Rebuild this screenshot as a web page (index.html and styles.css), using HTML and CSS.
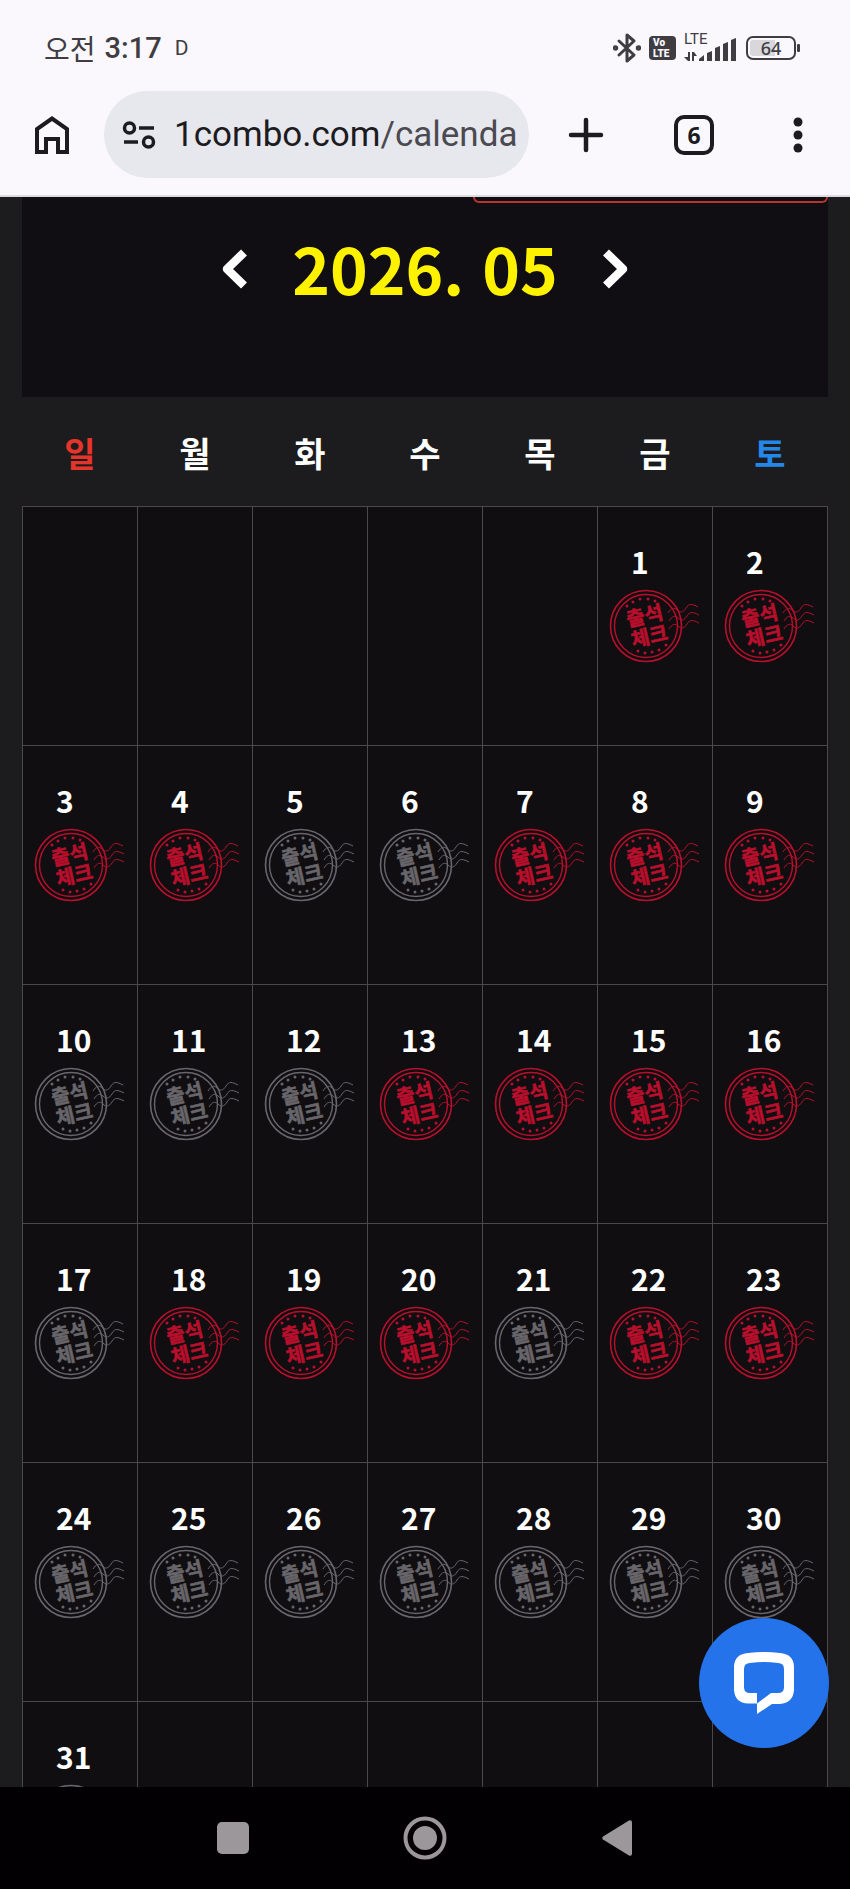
FILE: index.html
```html
<!DOCTYPE html>
<html lang="ko">
<head>
<meta charset="utf-8">
<meta name="viewport" content="width=device-width, initial-scale=1">
<title>1combo.com/calendar</title>
<link rel="stylesheet" href="styles.css">
</head>
<body>
<svg class="defs" aria-hidden="true">
  <symbol id="stamp-frame" viewBox="0 0 92 76">
    <g fill="none" stroke="currentColor">
      <circle cx="37" cy="38" r="35.5" stroke-width="1.6"/>
      <circle cx="37" cy="38" r="31.5" stroke-width="1.4"/>
      <path stroke-width="1" d="M59 25c3-5 6-6 9-3s6 3 9-2 6-4 12-1M60 33c3-5 6-6 9-3s6 3 9-2 6-4 12-1M60 41c3-5 6-6 9-3s6 3 9-2 6-4 12-1"/>
    </g>
    <g fill="currentColor">
      <circle cx="18" cy="18" r="1.5"/><circle cx="24" cy="14" r="1.5"/><circle cx="31" cy="11" r="1.5"/><circle cx="39" cy="11" r="1.5"/><circle cx="46" cy="13" r="1.5"/>
      <circle cx="29" cy="63" r="1.5"/><circle cx="36" cy="65" r="1.5"/><circle cx="43" cy="64" r="1.5"/><circle cx="50" cy="62" r="1.5"/><circle cx="57" cy="57" r="1.5"/>
    </g>
  </symbol>
</svg>

<header class="browser">
  <div class="status">
    <div class="clock"><span class="meridiem">오전</span> <span class="time">3:17</span> <span class="mark">D</span></div>
    <div class="indicators">
      <svg width="28" height="32" viewBox="0 0 28 32" fill="none" stroke="#3f3d42" stroke-width="3" stroke-linejoin="round" stroke-linecap="round"><path d="M6 9l15 14-7 6V3l7 6L6 23"/><circle cx="2.500" cy="16" r="1.200"/><circle cx="25.500" cy="16" r="1.200"/></svg>
      <div class="volte"><span>Vo</span><span>LTE</span></div>
      <div class="signal">
        <span class="lte">LTE</span>
        <svg width="54" height="28" viewBox="0 0 54 28" fill="#3f3d42"><path d="M4 18h2v9H4l-4-4h4zM8 27v-9h2l3 4h-3v5zM15 27v-2l5-4v6zM23 27v-8l5-2v10zM31 27V14l5-2v15zM39 27V10l5-2v19zM47 27V6l5-2v23z"/></svg>
      </div>
      <div class="battery">64</div>
    </div>
  </div>
  <div class="toolbar">
    <button class="tool" aria-label="홈">
      <svg width="36" height="40" viewBox="0 0 36 40" fill="none" stroke="#1c1b20" stroke-width="4"><path d="M3 37V14L18 3.500 33 14v23h-9V24H12v13z"/></svg>
    </button>
    <button class="address" aria-label="주소창">
      <svg width="34" height="30" viewBox="0 0 34 30" fill="none" stroke="#1c1b20" stroke-width="3.500"><circle cx="7.500" cy="8" r="5"/><circle cx="26.500" cy="22" r="5"/><path d="M17 8h15M2 22h14"/></svg>
      <span class="url">1combo.com<span class="path">/calenda</span></span>
    </button>
    <button class="tool" aria-label="새 탭">
      <svg width="36" height="36" viewBox="0 0 36 36" stroke="#1c1b20" stroke-width="4.500" stroke-linecap="round"><path d="M18 3v30M3 18h30"/></svg>
    </button>
    <button class="tool" aria-label="탭 목록"><span class="tabs">6</span></button>
    <button class="tool" aria-label="메뉴">
      <svg width="10" height="36" viewBox="0 0 10 36" fill="#1c1b20"><circle cx="5" cy="5" r="4.500"/><circle cx="5" cy="18" r="4.500"/><circle cx="5" cy="31" r="4.500"/></svg>
    </button>
  </div>
</header>

<main class="page">
  <section class="month">
    <div class="notice"></div>
    <div class="month-nav">
      <button aria-label="이전 달"><svg width="28" height="40" viewBox="0 0 28 40" fill="none" stroke="#fff" stroke-width="8.500" stroke-linejoin="round"><path d="M24 3.500L7 20l17 16.500"/></svg></button>
      <h1>2026. 05</h1>
      <button aria-label="다음 달"><svg width="28" height="40" viewBox="0 0 28 40" fill="none" stroke="#fff" stroke-width="8.500" stroke-linejoin="round"><path d="M4 3.500L21 20 4 36.500"/></svg></button>
    </div>
  </section>
  <table class="calendar">
    <thead>
      <tr><th class="sun">일</th><th>월</th><th>화</th><th>수</th><th>목</th><th>금</th><th class="sat">토</th></tr>
    </thead>
    <tbody id="days"></tbody>
  </table>
  <button class="chat" aria-label="채팅">
    <svg width="62" height="64" viewBox="0 0 62 64" fill="#fff"><path fill-rule="evenodd" d="M15 2Q31 0 47 2 60 3 61 15V39Q60 52 47 53H39L24 63V42H17Q11 42 11 36V18Q11 12 17 12 31 10 45 12 51 12 51 18V36Q51 42 45 42H38L24 52.500H15Q2 52 1 39V15Q2 3 15 2Z"/></svg>
  </button>
</main>

<nav class="system">
  <button aria-label="최근 앱"><svg width="32" height="32" viewBox="0 0 32 32"><rect width="32" height="32" rx="5"/></svg></button>
  <button aria-label="홈 화면"><svg width="44" height="44" viewBox="0 0 44 44"><circle cx="22" cy="22" r="12"/><circle cx="22" cy="22" r="19.500" fill="none" stroke="#9c979b" stroke-width="4"/></svg></button>
  <button aria-label="뒤로"><svg width="30" height="36" viewBox="0 0 30 36"><path d="M1 16.500L27 .500q3-1 3 2v31q0 3-3 2L1 19.500q-1.500-1.500 0-3z"/></svg></button>
</nav>
<script src="calendar.js"></script>
</body>
</html>
```
FILE: styles.css
```css
* { box-sizing: border-box; }

body {
  margin: 0;
  height: 100vh;
  display: flex;
  flex-direction: column;
  overflow: hidden;
  background: #1c1b1d;
  color: #fff;
  font-family: "Noto Sans CJK KR", sans-serif;
}

button {
  margin: 0;
  padding: 0;
  border: 0;
  background: none;
  color: inherit;
  font: inherit;
  display: flex;
  align-items: center;
  justify-content: center;
}

svg { display: block; }

.defs { display: none; }

/* Browser chrome */
.browser {
  flex: none;
  background: #faf8fd;
  border-bottom: 2px solid #dcdbdf;
  padding: 20px 0 17px;
  color: #3f3d42;
}

.status {
  display: flex;
  justify-content: space-between;
  align-items: center;
  height: 56px;
  padding: 0 54px 0 44px;
}

.clock {
  display: flex;
  align-items: center;
  gap: 9px;
  line-height: 32px;
}

.meridiem { font-size: 28px; font-weight: 400; }
.time { font: 500 29px/32px Roboto, sans-serif; }
.mark { font: 400 21px/32px Roboto, sans-serif; padding-left: 4px; }

.indicators { display: flex; align-items: center; gap: 8px; }

.volte {
  width: 27px;
  height: 24px;
  border-radius: 4px;
  background: #3f3d42;
  color: #faf8fd;
  font: 900 10px/11px Roboto, sans-serif;
  display: flex;
  flex-direction: column;
  justify-content: center;
  padding-left: 4px;
}

.signal { position: relative; }
.lte {
  position: absolute;
  top: -1px;
  left: 0;
  font: 400 15px/12px Roboto, sans-serif;
}

.battery {
  position: relative;
  width: 50px;
  height: 24px;
  border: 2px solid #3f3d42;
  border-radius: 7px;
  background: linear-gradient(90deg, #d8d7db 60%, #faf8fd 60%) content-box;
  padding: 2px;
  font: 500 18px/17px "Noto Sans", sans-serif;
  text-align: center;
}

.battery::after {
  content: "";
  position: absolute;
  right: -6px;
  top: 6px;
  width: 3px;
  height: 8px;
  border-radius: 1px;
  background: #3f3d42;
}

.toolbar {
  display: grid;
  grid-template-columns: 104px 1fr 114px 102px 105px;
  align-items: center;
  padding-top: 15px;
}

.tool { height: 87px; }

.address {
  height: 87px;
  min-width: 0;
  border-radius: 44px;
  background: #e7e7ee;
  padding: 0 16px 0 18px;
  gap: 18px;
  justify-content: flex-start;
  overflow: hidden;
}

.address svg { flex: none; }

.url {
  font: 400 35px/44px Roboto, sans-serif;
  color: #1c1b20;
  white-space: nowrap;
}

.path { color: #4b4a50; }

.tabs {
  width: 40px;
  height: 40px;
  border: 4px solid #1c1b20;
  border-radius: 10px;
  color: #1c1b20;
  font: 700 23px/32px "Noto Sans", sans-serif;
}

/* Page */
.page {
  position: relative;
  flex: 1;
  min-height: 0;
  overflow: hidden;
  padding: 0 22px;
}

.month {
  height: 200px;
  background: #100e12;
}

.notice {
  width: 44%;
  height: 6px;
  margin-left: auto;
  border: 2px solid #b8352c;
  border-top: 0;
  border-radius: 0 0 10px 10px;
}

.month-nav {
  display: flex;
  justify-content: center;
  align-items: flex-start;
  gap: 44px;
  padding-top: 20px;
}

.month-nav button { height: 92px; }

.month-nav h1 {
  margin: 0;
  color: #fff200;
  font-size: 64px;
  font-weight: 700;
  line-height: 88px;
}

.calendar {
  width: 100%;
  table-layout: fixed;
  border-collapse: collapse;
}

.calendar th {
  height: 109px;
  padding: 2px 0 0;
  font-size: 34px;
  font-weight: 700;
}

.calendar .sun { color: #e5352b; }
.calendar .sat { color: #2388e8; }

.calendar td {
  height: 239px;
  padding: 38px 0 0 11px;
  border: 1px solid #4a494c;
  background: #100e11;
  vertical-align: top;
}

.date {
  display: block;
  padding-left: 22px;
  font-size: 30px;
  font-weight: 700;
  line-height: 32px;
}

.stamp {
  width: 92px;
  height: 76px;
  margin-top: 11px;
  color: #68666a;
}

.stamp.checked { color: #b80f2c; }

.stamp text {
  fill: currentColor;
  stroke: currentColor;
  stroke-width: 0.6px;
  font-size: 20px;
  font-weight: 700;
  text-anchor: middle;
}

.chat {
  position: absolute;
  right: 21px;
  bottom: 39px;
  width: 130px;
  height: 130px;
  border-radius: 50%;
  background: #2473eb;
}

/* System navigation */
.system {
  flex: none;
  display: flex;
  justify-content: center;
  height: 102px;
  background: #020002;
}

.system button { width: 192px; }
.system svg { fill: #9c979b; }
```
FILE: calendar.js
```js
const FIRST_WEEKDAY = 5;
const DAYS_IN_MONTH = 31;
const attended = new Set([1, 2, 3, 4, 7, 8, 9, 13, 14, 15, 16, 18, 19, 20, 22, 23]);

function stamp(day) {
  const state = attended.has(day) ? "stamp checked" : "stamp";
  return `<svg class="${state}" viewBox="0 0 92 76">
    <use href="#stamp-frame"/>
    <g transform="rotate(-13 37 38)"><text x="38" y="35">출석</text><text x="38" y="56">체크</text></g>
  </svg>`;
}

const body = document.getElementById("days");
for (let first = 1 - FIRST_WEEKDAY; first <= DAYS_IN_MONTH; first += 7) {
  const row = body.insertRow();
  for (let day = first; day < first + 7; day++) {
    const cell = row.insertCell();
    if (day >= 1 && day <= DAYS_IN_MONTH) {
      cell.innerHTML = `<span class="date">${day}</span>${stamp(day)}`;
    }
  }
}
```
